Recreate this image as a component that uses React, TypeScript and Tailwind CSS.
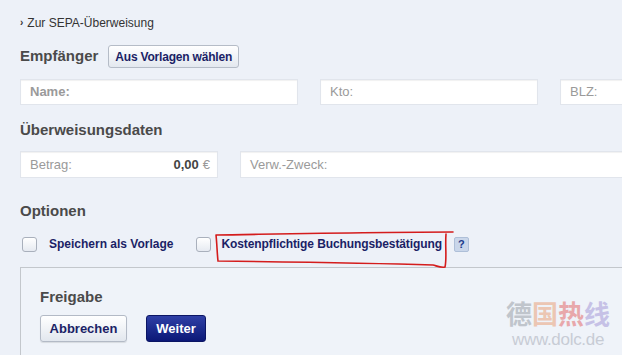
import React from 'react'

const font = "font-['Liberation_Sans',Arial,sans-serif]"

function Field({ label, width, bold, right }: { label: string; width: string; bold?: boolean; right?: React.ReactNode }) {
  return (
    <div
      className={`${width} h-full shrink-0 bg-white border border-[#e1e5ec] shadow-[inset_0_1px_1px_rgba(0,0,0,0.06)] flex items-center justify-between pl-[9px] pr-[7px]`}
    >
      <span className={`text-[13px] text-[#9a9a9a] ${bold ? 'font-bold' : ''}`}>{label}</span>
      {right}
    </div>
  )
}

function Checkbox({ className = '' }: { className?: string }) {
  return (
    <span
      className={`block w-[15px] h-[15px] shrink-0 rounded-[3px] border border-[#a9b0bc] bg-gradient-to-b from-white to-[#e6eaf1] ${className}`}
    />
  )
}

export default function App() {
  return (
    <div className={`${font} relative w-[622px] h-[355px] overflow-hidden bg-[#edf1f8] text-[#333]`}>
      <div className="pl-[20px]">
        {/* Link */}
        <div className="mt-[15px] h-[16px] leading-[16px] text-[12px] text-[#333] flex items-center gap-[4px]">
          <span className="text-[10px] font-bold">›</span>
          <span>Zur SEPA-Überweisung</span>
        </div>

        {/* Empfänger */}
        <div className="mt-[14px] h-[23px] flex items-center gap-[10px]">
          <h2 className="text-[15px] font-bold text-[#4a4a4a]">Empfänger</h2>
          <button className="h-[23px] px-[6px] rounded-[3px] border border-[#b5bcc7] bg-gradient-to-b from-white to-[#e3e8ef] text-[12px] font-bold text-[#1b1f66] tracking-[-0.2px]">
            Aus Vorlagen wählen
          </button>
        </div>
        <div className="mt-[11px] h-[26px] flex gap-[22px]">
          <Field label="Name:" width="w-[278px]" bold />
          <Field label="Kto:" width="w-[218px]" />
          <Field label="BLZ:" width="w-[120px]" />
        </div>

        {/* Überweisungsdaten */}
        <h2 className="mt-[15px] h-[20px] leading-[20px] text-[15px] font-bold text-[#4a4a4a]">Überweisungsdaten</h2>
        <div className="mt-[11px] h-[27px] flex gap-[22px]">
          <Field
            label="Betrag:"
            width="w-[198px]"
            right={
              <span className="text-[13px]">
                <span className="font-bold text-[#444]">0,00</span>
                <span className="text-[#999] ml-[4px]">€</span>
              </span>
            }
          />
          <Field label="Verw.-Zweck:" width="w-[400px]" />
        </div>

        {/* Optionen */}
        <h2 className="mt-[23px] h-[20px] leading-[20px] text-[15px] font-bold text-[#4a4a4a]">Optionen</h2>
        <div className="mt-[15px] h-[16px] flex items-center text-[12px] font-bold text-[#1b1f66]">
          <Checkbox className="ml-[2px]" />
          <span className="ml-[12px]">Speichern als Vorlage</span>
          <Checkbox className="ml-[22px]" />
          <span className="ml-[11px] tracking-[-0.1px]">Kostenpflichtige Buchungsbestätigung</span>
          <span className="ml-[12px] w-[15px] h-[15px] rounded-[2px] border border-[#aebfd8] bg-[#c9d6ea] flex items-center justify-center text-[11px] text-[#1b3a8a]">?</span>
        </div>

        {/* Freigabe */}
        <div className="mt-[15px] h-[120px] border-t border-l border-[#c3c7cc] bg-[#eff3f9] pl-[19px]">
          <h2 className="mt-[19px] h-[20px] leading-[20px] text-[15px] font-bold text-[#4a4a4a]">Freigabe</h2>
          <div className="mt-[8px] h-[27px] flex gap-[19px]">
            <button className="w-[87px] h-[27px] rounded-[3px] border border-[#b3bac6] bg-gradient-to-b from-white to-[#e2e7ee] shadow-[0_1px_1px_rgba(0,0,0,0.1)] text-[13px] font-bold text-[#1b1f66]">
              Abbrechen
            </button>
            <button className="w-[60px] h-[27px] rounded-[3px] border border-[#0b1564] bg-gradient-to-b from-[#2f3fa6] to-[#0c1877] text-[13px] font-bold text-white">
              Weiter
            </button>
          </div>
        </div>
      </div>

      {/* red annotation */}
      <svg className="absolute left-0 top-0 pointer-events-none" width="622" height="355" viewBox="0 0 622 355">
        <path
          d="M216 235 C 280 234, 380 232, 453 232 M446 234 C 445 247, 447 258, 445 267 C 441 268, 437 266, 433 265 C 370 263, 300 262, 218 261 C 217 252, 217 244, 216 235"
          fill="none"
          stroke="#d41c1c"
          strokeWidth="1.6"
          strokeLinecap="round"
        />
      </svg>

      {/* watermark */}
      <div className="absolute left-[506px] top-[299px] flex flex-col items-center opacity-55">
        <div className="flex text-[26px] leading-[28px] font-bold font-['Noto_Sans_CJK_SC',sans-serif]">
          <span className="text-[#9aa0a8]">德</span>
          <span className="text-[#eaa27a]">国</span>
          <span className="text-[#e36c6c]">热</span>
          <span className="text-[#a59ad8]">线</span>
        </div>
        <div className="text-[17px] leading-[20px] text-[#a8adb8] mt-[3px] tracking-[-0.3px]">www.dolc.de</div>
      </div>
    </div>
  )
}
